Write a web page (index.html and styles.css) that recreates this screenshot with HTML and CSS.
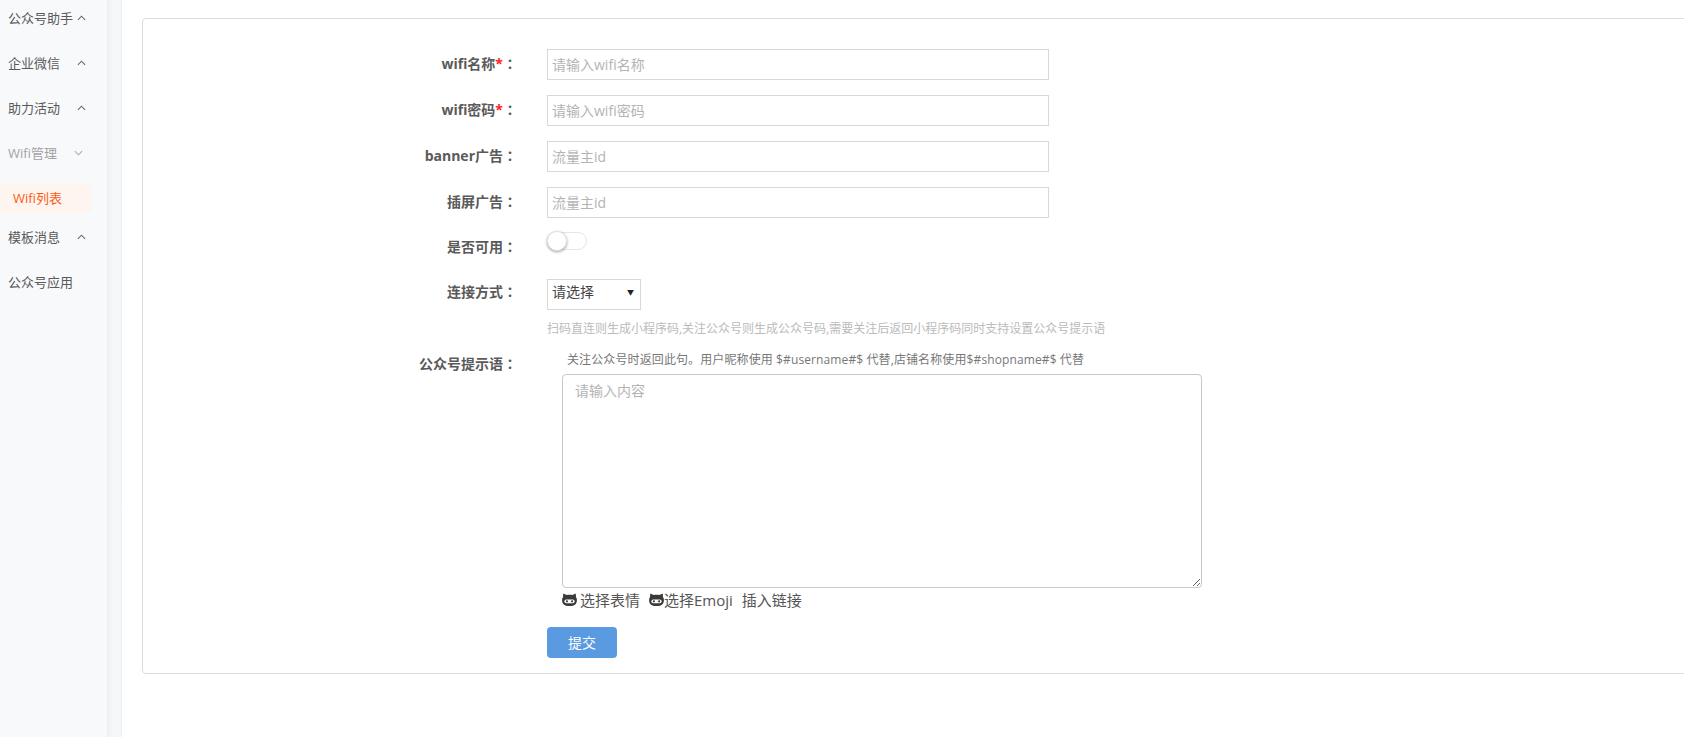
FILE: index.html
```html
<!DOCTYPE html>
<html lang="zh">
<head>
<meta charset="utf-8">
<title>Wifi</title>
<link rel="stylesheet" href="styles.css">
</head>
<body>
<div class="app">
  <aside class="side">
    <ul class="menu">
      <li class="item first"><span>公众号助手</span><svg class="chev" viewBox="0 0 10 6"><path d="M1 5l4-4 4 4"/></svg></li>
      <li class="item"><span>企业微信</span><svg class="chev far" viewBox="0 0 10 6"><path d="M1 5l4-4 4 4"/></svg></li>
      <li class="item"><span>助力活动</span><svg class="chev far" viewBox="0 0 10 6"><path d="M1 5l4-4 4 4"/></svg></li>
      <li class="item muted"><span>Wifi管理</span><svg class="chev far" viewBox="0 0 10 6"><path d="M1 1l4 4 4-4"/></svg></li>
      <li class="sub">Wifi列表</li>
      <li class="item"><span>模板消息</span><svg class="chev far" viewBox="0 0 10 6"><path d="M1 5l4-4 4 4"/></svg></li>
      <li class="item"><span>公众号应用</span></li>
    </ul>
  </aside>
  <div class="gutter"></div>
  <main class="main">
    <form class="card">
      <div class="row">
        <label class="lab">wifi名称<i>*</i><span class="colon" lang="zh-TW">：</span></label>
        <input class="inp" type="text" placeholder="请输入wifi名称">
      </div>
      <div class="row">
        <label class="lab">wifi密码<i>*</i><span class="colon" lang="zh-TW">：</span></label>
        <input class="inp" type="text" placeholder="请输入wifi密码">
      </div>
      <div class="row">
        <label class="lab">banner广告<span class="colon" lang="zh-TW">：</span></label>
        <input class="inp" type="text" placeholder="流量主id">
      </div>
      <div class="row">
        <label class="lab">插屏广告<span class="colon" lang="zh-TW">：</span></label>
        <input class="inp" type="text" placeholder="流量主id">
      </div>
      <div class="row row-switch">
        <label class="lab">是否可用<span class="colon" lang="zh-TW">：</span></label>
        <span class="switch"><span class="knob"></span></span>
      </div>
      <div class="row row-select">
        <label class="lab">连接方式<span class="colon" lang="zh-TW">：</span></label>
        <div class="fake-select"><span>请选择</span><b>▼</b></div>
      </div>
      <p class="hint">扫码直连则生成小程序码,关注公众号则生成公众号码,需要关注后返回小程序码同时支持设置公众号提示语</p>
      <div class="row row-area">
        <label class="lab">公众号提示语<span class="colon" lang="zh-TW">：</span></label>
        <div class="area-col">
          <p class="note">关注公众号时返回此句。用户昵称使用 $#username#$ 代替,店铺名称使用$#shopname#$ 代替</p>
          <textarea class="area" placeholder="请输入内容"></textarea>
          <div class="tools">
            <a class="tool"><svg class="cat" viewBox="0 0 16 14"><path d="M1.500 0.500l3.300 1.700c2-.4 4.400-.4 6.400 0L14.500.5c.5 1.300.6 2.700.4 3.800.7.900 1.100 1.900 1.100 3.200 0 1.500-.4 3.300-1.500 4.500-1.300 1.400-3.800 2-6.500 2s-5.200-.6-6.500-2C.4 10.800 0 9 0 7.500c0-1.300.4-2.300 1.100-3.200-.2-1.100-.1-2.500.4-3.800z"/><rect class="eye" x="2.500" y="7" width="11" height="4" rx="2"/><circle class="pupil" cx="5.200" cy="9" r="1.200"/><circle class="pupil" cx="10.800" cy="9" r="1.200"/></svg> 选择表情</a>
            <a class="tool emoji"><svg class="cat" viewBox="0 0 16 14"><path d="M1.500 0.500l3.300 1.700c2-.4 4.400-.4 6.400 0L14.500.5c.5 1.300.6 2.700.4 3.800.7.900 1.100 1.900 1.100 3.200 0 1.500-.4 3.300-1.500 4.500-1.300 1.400-3.800 2-6.500 2s-5.200-.6-6.500-2C.4 10.800 0 9 0 7.500c0-1.300.4-2.300 1.100-3.200-.2-1.100-.1-2.500.4-3.800z"/><rect class="eye" x="2.500" y="7" width="11" height="4" rx="2"/><circle class="pupil" cx="5.200" cy="9" r="1.200"/><circle class="pupil" cx="10.800" cy="9" r="1.200"/></svg>选择Emoji</a>
            <a class="tool">插入链接</a>
          </div>
        </div>
      </div>
      <div class="row row-btn">
        <button class="btn" type="button">提交</button>
      </div>
    </form>
  </main>
</div>
</body>
</html>
```
FILE: styles.css
```css
* { box-sizing: border-box; }
html, body { margin: 0; height: 100%; overflow: hidden; background: #fff; }
body { font-family: "Open Sans", "Noto Sans CJK SC", sans-serif; color: #555; }
.app { display: flex; height: 737px; }
.side { width: 108px; flex: none; background: #f8f9fb; border-right: 1px solid #eceef1; }
.gutter { width: 14px; flex: none; background: linear-gradient(to right, #f0f1f4, #f6f7f9 40%, #f6f7f9 90%, #eceef1); }
.main { flex: 1; min-width: 0; padding: 18px 0 0 20px; overflow: hidden; }

.menu { list-style: none; margin: 0; padding: 0; }
.item { display: flex; align-items: center; height: 45px; padding: 0 0 2px 8px; font-size: 13px; color: #5a5a5a; }
.item.first { height: 41px; padding-bottom: 6px; }
.item span { white-space: nowrap; }
.item.muted { color: #a3a3a3; }
.chev { width: 9px; height: 6px; margin-left: 4px; fill: none; stroke: #666; stroke-width: 1.2; }
.chev.far { margin-left: 17px; }
.muted .chev { stroke: #aaa; }
.sub { display: flex; align-items: center; height: 30px; width: 92px; margin: 7px 0 2px; padding: 0 0 2px 13px; font-size: 13px; color: #ff5a14; background: #fef5f0; border-radius: 0 5px 5px 0; }

.card { width: 1640px; height: 656px; padding: 30px 0 0; border: 1px solid #dcdcdc; border-radius: 4px; }
.row { display: flex; margin-bottom: 15px; }
.lab { flex: none; width: 374px; margin-right: 30px; text-align: right; font-size: 14px; font-weight: 700; color: #5a5a5a; line-height: 29px; white-space: nowrap; }
.lab i { color: #f22; font-style: normal; }
.colon { font-family: "Noto Sans CJK TC", sans-serif; }
.inp { width: 502px; height: 31px; padding: 0 4px; border: 1px solid #d8d8d8; font: 14px "Open Sans", "Noto Sans CJK SC", sans-serif; color: #555; background: #fff; outline: none; border-radius: 0; }
.inp::placeholder, .area::placeholder { color: #b4b4b4; opacity: 1; }

.row-switch { height: 31px; margin-bottom: 15px; }
.row-switch .lab { line-height: 27px; }
.switch { display: block; width: 40px; height: 18px; margin-top: -1px; border: 1px solid #e6e6e6; border-radius: 9px; background: #fff; position: relative; }
.knob { position: absolute; left: -1px; top: -2px; width: 20px; height: 20px; border-radius: 50%; background: #fff; border: 1px solid #e4e4e4; box-shadow: 0 1px 3px rgba(0,0,0,.4); }

.row-select { margin-bottom: 0; }
.row-select .lab { line-height: 25px; }
.fake-select { width: 94px; height: 31px; padding: 0 5px 0 4px; display: flex; align-items: flex-start; justify-content: space-between; border: 1px solid #d8d8d8; font-size: 14px; line-height: 24px; color: #444; }
.fake-select b { font-size: 7px; font-weight: 400; color: #222; margin: 1px 1px 0 0; }
.hint { margin: 10px 0 0 404px; height: 18px; font-size: 12px; line-height: 18px; color: #bbb; }

.row-area { margin: 10px 0 0; }
.area-col { margin-left: 15px; width: 640px; }
.row-area .lab { line-height: 30px; }
.note { margin: 0 0 0 5px; height: 26px; font-size: 12px; line-height: 24px; letter-spacing: .11px; color: #777; white-space: nowrap; }
.area { display: block; width: 640px; height: 214px; padding: 5px 12px; border: 1px solid #c8c8c8; border-radius: 4px; font: 14px "Open Sans", "Noto Sans CJK SC", sans-serif; background: #fff; outline: none; }
.tools { display: flex; height: 22px; align-items: center; font-size: 15px; color: #555; gap: 9px; }
.tool { display: flex; align-items: center; white-space: nowrap; gap: 3px; }
.tool.emoji { gap: 0; }
.cat { width: 15px; height: 13px; fill: #3a3a3a; }
.cat .eye { fill: #fff; }
.cat .pupil { fill: #3a3a3a; }

.row-btn { margin: 17px 0 0 404px; }
.btn { width: 70px; height: 31px; padding: 0 0 2px; border: 0; border-radius: 4px; background: #5a9ae0; color: #fff; font: 14px "Open Sans", "Noto Sans CJK SC", sans-serif; }
```
